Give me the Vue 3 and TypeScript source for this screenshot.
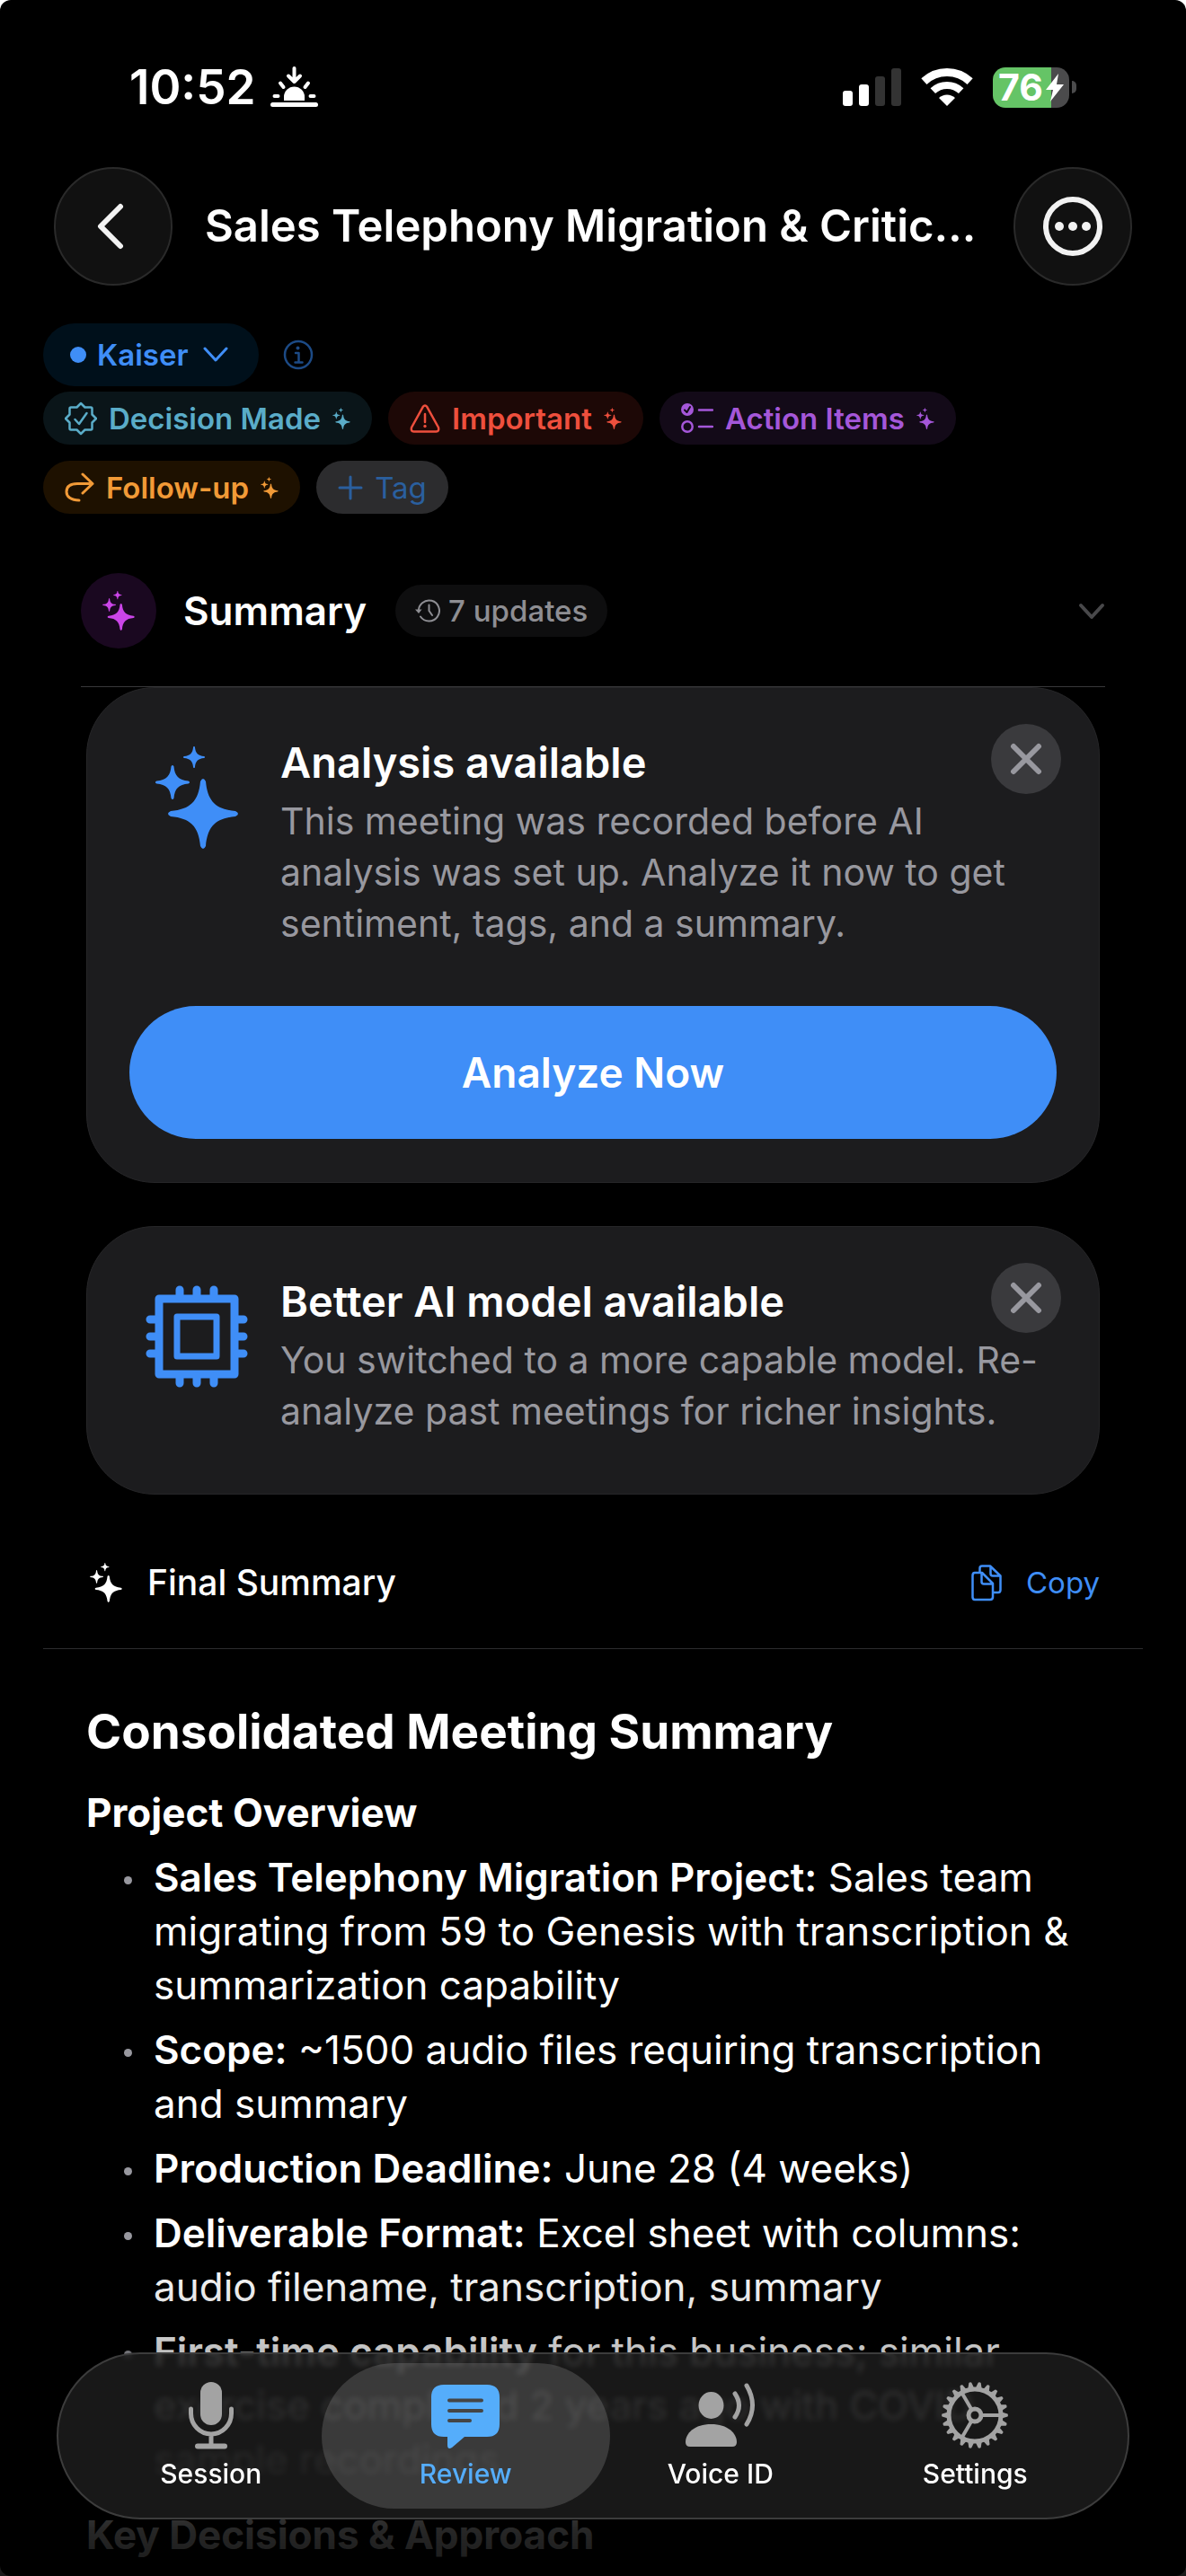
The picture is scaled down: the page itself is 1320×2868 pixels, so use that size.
<script setup lang="ts">
import { ref } from 'vue'

interface Tag {
  label: string
  tone: 'teal' | 'red' | 'purple' | 'orange'
}

interface Point {
  lead: string
  text: string
}

const tags: Tag[] = [
  { label: 'Decision Made', tone: 'teal' },
  { label: 'Important', tone: 'red' },
  { label: 'Action Items', tone: 'purple' },
  { label: 'Follow-up', tone: 'orange' },
]

const points: Point[] = [
  {
    lead: 'Sales Telephony Migration Project:',
    text: 'Sales team migrating from 59 to Genesis with transcription & summarization capability',
  },
  { lead: 'Scope:', text: '~1500 audio files requiring transcription and summary' },
  { lead: 'Production Deadline:', text: 'June 28 (4 weeks)' },
  {
    lead: 'Deliverable Format:',
    text: 'Excel sheet with columns: audio filename, transcription, summary',
  },
  {
    lead: 'First-time capability',
    text: 'for this business; similar exercise completed 2 years ago with COVID sample recordings',
  },
]

const tabs = ['Session', 'Review', 'Voice ID', 'Settings']
const activeTab = ref('Review')

const toothAngles = Array.from({ length: 22 }, (_, i) => (i * 360) / 22)
</script>

<template>
  <div class="app">
    <svg class="defs" aria-hidden="true">
      <defs>
        <path
          id="star"
          d="M-3-36Q0-42 3-36C5-14 14-5 36-3Q42 0 36 3C14 5 5 14 3 36Q0 42-3 36C-5 14-14 5-36 3Q-42 0-36-3C-14-5-5-14-3-36Z"
        />
        <symbol id="sparkles" viewBox="0 0 92 114">
          <use href="#star" transform="translate(53 75)" />
          <use href="#star" transform="translate(19 40) scale(.49)" />
          <use href="#star" transform="translate(43 12) scale(.31)" />
        </symbol>
      </defs>
    </svg>

    <div class="status">
      <span class="clock">10:52</span>
      <svg class="sunset" width="53" height="46" viewBox="0 0 53 46" fill="none" stroke="#fff" stroke-width="4" stroke-linecap="round" stroke-linejoin="round">
        <path d="M26.500 2V17M20 10.500 26.500 17 33 10.500M4.500 33h4M44.500 33h4M11 18.500 14.500 23M42 18.500 38.500 23" />
        <path d="M15 38v-4a11.500 11.500 0 0 1 23 0v4z" fill="#fff" stroke="none" />
        <path d="M2.500 42.500H50.500" stroke-width="5" />
      </svg>
      <span class="spacer"></span>
      <svg width="65" height="42" viewBox="0 0 65 42">
        <rect x="0" y="25" width="11" height="17" rx="3" fill="#fff" />
        <rect x="18" y="18" width="11" height="24" rx="3" fill="#fff" />
        <rect x="36" y="9" width="11" height="33" rx="3" fill="#333" />
        <rect x="54" y="0" width="11" height="42" rx="3" fill="#333" />
      </svg>
      <svg class="wifi" width="58" height="43" viewBox="0 0 58 43" fill="none" stroke="#fff">
        <path d="M3.400 14.600A37.500 37.500 0 0 1 54.600 14.600" stroke-width="9" />
        <path d="M13.300 25.200A23 23 0 0 1 44.700 25.200" stroke-width="8" />
        <path d="M29 42 20 33A13 13 0 0 1 38 33Z" fill="#fff" stroke="none" />
      </svg>
      <div class="battery">
        <span class="level">76</span>
        <svg width="20" height="31" viewBox="0 0 20 31"><path d="M14 0 0 18H8L5 31 20 12H12Z" fill="#fff" /></svg>
      </div>
      <span class="battery-cap"></span>
    </div>

    <header class="nav">
      <button class="round" aria-label="Back">
        <svg width="38" height="54" viewBox="0 0 38 54" fill="none" stroke="#f2f2f2" stroke-width="6" stroke-linecap="round" stroke-linejoin="round">
          <path d="M27 5 5 27 27 49" />
        </svg>
      </button>
      <h1>Sales Telephony Migration &amp; Critic…</h1>
      <button class="round" aria-label="More">
        <svg width="66" height="66" viewBox="0 0 66 66">
          <circle cx="33" cy="33" r="30" fill="none" stroke="#f2f2f2" stroke-width="6" />
          <g fill="#f2f2f2"><circle cx="18" cy="33" r="5" /><circle cx="33" cy="33" r="5" /><circle cx="48" cy="33" r="5" /></g>
        </svg>
      </button>
    </header>

    <div class="labels">
      <div class="owner">
        <button class="folder">
          <span class="dot"></span>Kaiser
          <svg width="28" height="18" viewBox="0 0 28 18" fill="none" stroke="currentColor" stroke-width="3" stroke-linecap="round" stroke-linejoin="round"><path d="M2 2 14 15 26 2" /></svg>
        </button>
        <button class="info" aria-label="Info">
          <svg width="34" height="34" viewBox="0 0 34 34" fill="none" stroke="#1c4a85" stroke-width="2.500" stroke-linecap="round" stroke-linejoin="round">
            <circle cx="17" cy="17" r="15" />
            <path d="M14 15h3.500v10M13.500 25.500h8" />
            <circle cx="16.500" cy="9.500" r="2" fill="#1c4a85" stroke="none" />
          </svg>
        </button>
      </div>
      <div class="tags">
        <button v-for="tag in tags" :key="tag.label" class="tag" :class="tag.tone">
          <svg v-if="tag.tone === 'teal'" width="36" height="38" viewBox="-18 -19 36 38" fill="none" stroke="currentColor" stroke-width="2.500" stroke-linecap="round" stroke-linejoin="round">
            <path d="M0-17 4.500-12.500H11Q12.500-12.500 12.500-11V-4.500L17 0 12.500 4.500V11Q12.500 12.500 11 12.500H4.500L0 17-4.500 12.500H-11Q-12.500 12.500-12.500 11V4.500L-17 0-12.500-4.500V-11Q-12.500-12.500-11-12.500H-4.500Z" />
            <path d="M-6.500 1-2 6 6.500-6" />
          </svg>
          <svg v-else-if="tag.tone === 'red'" width="34" height="32" viewBox="0 0 34 32" fill="none" stroke="currentColor" stroke-width="2.500" stroke-linecap="round" stroke-linejoin="round">
            <path d="M14.800 2.800Q17 .2 19.200 2.800L32 26Q33 30.500 29.500 30.500H4.500Q1 30.500 2 26Z" />
            <path d="M17 11v9" />
            <circle cx="17" cy="24.500" r="1.700" fill="currentColor" stroke="none" />
          </svg>
          <svg v-else-if="tag.tone === 'purple'" width="36" height="34" viewBox="0 0 36 34" fill="none" stroke="currentColor" stroke-width="2.500" stroke-linecap="round" stroke-linejoin="round">
            <circle cx="7" cy="7" r="7" fill="currentColor" stroke="none" />
            <path d="M4 7.500 6.500 10 10 4" stroke="#130a18" stroke-width="2" />
            <circle cx="7" cy="26" r="5.700" />
            <path d="M20 7.500h15M20 26h15" />
          </svg>
          <svg v-else width="33" height="33" viewBox="0 0 33 33" fill="none" stroke="currentColor" stroke-width="3" stroke-linecap="round" stroke-linejoin="round">
            <path d="M20 2 31 12.500 20 23M31 12.500H14C6 12.500 2 16 2 21.500S7 31 16 31" />
          </svg>
          <span>{{ tag.label }}</span>
          <svg width="20" height="24" fill="currentColor"><use href="#sparkles" /></svg>
        </button>
        <button class="tag add">
          <svg width="28" height="28" viewBox="0 0 28 28" fill="none" stroke="currentColor" stroke-width="3" stroke-linecap="round"><path d="M14 2V26M2 14H26" /></svg>
          <span>Tag</span>
        </button>
      </div>
    </div>

    <section class="summary">
      <div class="summary-head">
        <span class="badge"><svg width="36" height="44" fill="#cb45e8"><use href="#sparkles" /></svg></span>
        <h2>Summary</h2>
        <button class="updates">
          <svg width="28" height="26" viewBox="0 0 28 26" fill="none" stroke="currentColor" stroke-width="2" stroke-linecap="round" stroke-linejoin="round">
            <path d="M4 14A11.500 11.500 0 1 1 6 19.500M15.500 6.500V13L19 18" />
            <path d="M0 11.500H7.500L4 16Z" fill="currentColor" stroke="none" />
          </svg>
          7 updates
        </button>
        <span class="spacer"></span>
        <svg width="30" height="20" viewBox="0 0 30 20" fill="none" stroke="#48484a" stroke-width="4" stroke-linecap="round" stroke-linejoin="round"><path d="M3 4 15 17 27 4" /></svg>
      </div>

      <div class="cards">
        <article class="card">
          <div class="card-body">
            <div class="card-icon"><svg width="92" height="114" fill="#3f8ef7"><use href="#sparkles" /></svg></div>
            <div>
              <h3>Analysis available</h3>
              <p>This meeting was recorded before AI analysis was set up. Analyze it now to get sentiment, tags, and a summary.</p>
            </div>
          </div>
          <button class="primary">Analyze Now</button>
          <button class="close" aria-label="Dismiss">
            <svg width="36" height="36" viewBox="0 0 36 36" stroke="#98989f" stroke-width="6" stroke-linecap="round"><path d="M4 4 32 32M32 4 4 32" /></svg>
          </button>
        </article>

        <article class="card">
          <div class="card-body">
            <div class="card-icon">
              <svg width="114" height="114" viewBox="0 0 114 114" fill="none" stroke="#3f8ef7" stroke-linejoin="round" stroke-linecap="round">
                <rect x="15" y="15" width="84" height="84" stroke-width="9" />
                <rect x="35" y="35" width="44" height="44" stroke-width="7" />
                <path stroke-width="9" d="M38 5V12M57 5V12M76 5V12M38 102V109M57 102V109M76 102V109M5 38H12M5 57H12M5 76H12M102 38H109M102 57H109M102 76H109" />
              </svg>
            </div>
            <div>
              <h3>Better AI model available</h3>
              <p>You switched to a more capable model. Re-analyze past meetings for richer insights.</p>
            </div>
          </div>
          <button class="close" aria-label="Dismiss">
            <svg width="36" height="36" viewBox="0 0 36 36" stroke="#98989f" stroke-width="6" stroke-linecap="round"><path d="M4 4 32 32M32 4 4 32" /></svg>
          </button>
        </article>
      </div>
    </section>

    <section class="final">
      <div class="final-head">
        <svg width="42" height="44" viewBox="-4 0 42 44" fill="#fff"><use href="#sparkles" width="36" height="44" /></svg>
        <h2>Final Summary</h2>
        <span class="spacer"></span>
        <button class="copy">
          <svg width="34" height="41" viewBox="0 0 34 41" fill="none" stroke="currentColor" stroke-width="2.500" stroke-linejoin="round">
            <path d="M4 9H12L24 21V36Q24 39 21 39H4Q1.500 39 1.500 36V12Q1.500 9 4 9ZM11.500 9V19Q11.500 21.500 14 21.500H24" />
            <path d="M9.500 9V4Q9.500 1.500 12 1.500H21L32.500 12.500V28Q32.500 31 30 31H24M21.500 1.500V10Q21.500 12.500 24 12.500H32.500" />
          </svg>
          Copy
        </button>
      </div>
      <div class="doc">
        <h2>Consolidated Meeting Summary</h2>
        <h3>Project Overview</h3>
        <ul>
          <li v-for="point in points" :key="point.lead">
            <span><strong>{{ point.lead }}</strong> {{ point.text }}</span>
          </li>
        </ul>
        <h3 class="next">Key Decisions &amp; Approach</h3>
      </div>
    </section>

    <div class="fade"></div>

    <nav class="tabbar">
      <button v-for="tab in tabs" :key="tab" class="tab" :class="{ active: tab === activeTab }" @click="activeTab = tab">
        <span class="tab-icon">
          <svg v-if="tab === 'Session'" width="50" height="75" viewBox="0 0 50 75" fill="none" stroke="currentColor" stroke-width="5" stroke-linecap="round">
            <rect x="13" y="0" width="24" height="48" rx="12" fill="currentColor" stroke="none" />
            <path d="M2.500 30v5a22.500 23 0 0 0 45 0v-5M25 59v11" />
            <path d="M10 71.500H40" stroke-width="6" />
          </svg>
          <svg v-else-if="tab === 'Review'" width="76" height="76" viewBox="0 -4 76 76">
            <path d="M14 0H62Q76 0 76 14V44Q76 58 62 58H37L23 70Q18 73 18 67V58H14Q0 58 0 44V14Q0 0 14 0Z" fill="currentColor" />
            <path d="M20 17.500H56M20 29H56M20 40H43" stroke="#454545" stroke-width="4" stroke-linecap="round" />
          </svg>
          <svg v-else-if="tab === 'Voice ID'" width="78" height="72" viewBox="0 0 78 72">
            <ellipse cx="28.500" cy="25" rx="14" ry="15" fill="currentColor" />
            <path d="M0 66C0 56 10 46 28.500 46S57 56 57 66Q57 71 52 71H5Q0 71 0 66Z" fill="currentColor" />
            <path d="M55 12Q64 25 55 38M68 3Q81 25 68 46" fill="none" stroke="currentColor" stroke-width="5" stroke-linecap="round" />
          </svg>
          <svg v-else width="76" height="76" viewBox="-38 -38 76 76" fill="none" stroke="currentColor" stroke-width="5">
            <circle r="29" />
            <circle r="7" />
            <path d="M8 0H28M-4-7-14.500-25M-4 7-14.500 25" stroke-width="4" />
            <path v-for="angle in toothAngles" :key="angle" :transform="`rotate(${angle})`" d="M30-3.500 36.500-1.500Q37.500 0 36.500 1.500L30 3.500Z" fill="currentColor" stroke="none" />
          </svg>
        </span>
        <span>{{ tab }}</span>
      </button>
    </nav>
  </div>
</template>

<style>
html,
body {
  margin: 0;
  background: #fff;
}
</style>

<style scoped>
.app {
  position: relative;
  min-height: 100vh;
  box-sizing: border-box;
  overflow: hidden;
  border-radius: 12px;
  background: #000;
  color: #fff;
  font-family: Inter, 'Liberation Sans', sans-serif;
}
.defs {
  position: absolute;
  width: 0;
  height: 0;
}
button {
  display: flex;
  align-items: center;
  margin: 0;
  padding: 0;
  border: 0;
  background: none;
  color: inherit;
  font: inherit;
  white-space: nowrap;
}
svg {
  flex: none;
  display: block;
}
h1,
h2,
h3,
p,
ul {
  margin: 0;
}
.spacer {
  flex: 1;
}

.status {
  display: flex;
  align-items: center;
  height: 50px;
  padding: 72px 122px 64px 144px;
}
.clock {
  font-size: 53px;
  font-weight: 600;
}
.sunset {
  margin-left: 16px;
}
.wifi {
  margin: 0 22px;
}
.battery {
  display: flex;
  align-items: center;
  justify-content: center;
  gap: 3px;
  width: 85px;
  height: 45px;
  border-radius: 14px;
  background: linear-gradient(90deg, #65c466 77%, #4b4b4c 77%);
}
.level {
  font-size: 41px;
  font-weight: 700;
  line-height: 45px;
}
.battery-cap {
  width: 5px;
  height: 14px;
  margin-left: 3px;
  border-radius: 0 5px 5px 0;
  background: #4b4b4c;
}

.nav {
  display: flex;
  align-items: center;
  gap: 36px;
  padding: 0 60px;
}
.round {
  flex: none;
  justify-content: center;
  width: 132px;
  height: 132px;
  border: 2px solid #2a2a2a;
  border-radius: 50%;
  background: #111;
}
.nav h1 {
  flex: 1;
  font-size: 49px;
  font-weight: 600;
  line-height: 60px;
  white-space: nowrap;
}

.labels {
  padding: 42px 48px 0;
  font-size: 33px;
  font-weight: 600;
}
.owner {
  display: flex;
  align-items: center;
  gap: 27px;
  margin-bottom: 6px;
}
.folder {
  gap: 12px;
  height: 70px;
  padding: 0 34px 0 30px;
  border-radius: 35px;
  background: #00101b;
  color: #3f8ef7;
}
.folder svg {
  margin-left: 4px;
}
.dot {
  width: 18px;
  height: 18px;
  border-radius: 50%;
  background: currentColor;
}
.tags {
  display: flex;
  flex-wrap: wrap;
  gap: 18px;
}
.tag {
  gap: 13px;
  height: 59px;
  padding: 0 24px;
  border-radius: 30px;
}
.teal {
  background: #0a1519;
  color: #5aacc8;
}
.red {
  background: #1d0806;
  color: #ee4f3d;
}
.purple {
  background: #130a18;
  color: #a557d9;
}
.orange {
  background: #1e1100;
  color: #f19a37;
}
.add {
  background: #2c2c2e;
  color: #2a5f9e;
  font-weight: 400;
}

.summary-head {
  display: flex;
  align-items: center;
  margin: 66px 90px 0;
  padding-bottom: 42px;
  border-bottom: 1px solid #38383a;
}
.badge {
  display: flex;
  align-items: center;
  justify-content: center;
  width: 84px;
  height: 84px;
  margin-right: 30px;
  border-radius: 50%;
  background: #1a0820;
}
.summary-head h2 {
  font-size: 44px;
  font-weight: 600;
  line-height: 60px;
}
.updates {
  gap: 9px;
  height: 58px;
  margin-left: 32px;
  padding: 0 22px;
  border-radius: 29px;
  background: #0e0e0f;
  color: #8e8e93;
  font-size: 33px;
  font-weight: 500;
}

.cards {
  display: flex;
  flex-direction: column;
  gap: 48px;
  padding: 0 96px;
}
.card {
  position: relative;
  box-sizing: border-box;
  border: 1px solid #262628;
  border-radius: 76px;
  background: #1c1c1e;
}
.card-body {
  display: flex;
  gap: 18px;
  padding: 53px 47px 63px;
}
.card-icon {
  display: flex;
  flex: none;
  align-items: flex-start;
  justify-content: center;
  width: 150px;
  padding-top: 12px;
}
.card h3 {
  font-size: 47px;
  font-weight: 600;
  line-height: 60px;
}
.card p {
  margin-top: 7px;
  color: #98989f;
  font-size: 41px;
  line-height: 57px;
}
.primary {
  justify-content: center;
  width: calc(100% - 94px);
  height: 148px;
  margin: 0 47px 48px;
  border-radius: 74px;
  background: #3f8ef7;
  font-size: 46px;
  font-weight: 600;
}
.close {
  position: absolute;
  top: 40px;
  right: 42px;
  justify-content: center;
  width: 78px;
  height: 78px;
  border-radius: 50%;
  background: #3a3a3d;
}

.final {
  padding: 68px 48px 16px;
}
.final-head {
  display: flex;
  align-items: center;
  padding: 0 48px 43px;
  border-bottom: 1px solid #2c2c2e;
}
.final-head h2 {
  margin-left: 26px;
  font-size: 39px;
  font-weight: 500;
  line-height: 60px;
}
.copy {
  gap: 27px;
  color: #3f8ef7;
  font-size: 33px;
}
.doc {
  padding: 59px 48px 0;
}
.doc h2 {
  font-size: 53px;
  font-weight: 700;
  line-height: 66px;
}
.doc h3 {
  margin-top: 27px;
  font-size: 44px;
  font-weight: 700;
  line-height: 60px;
}
.doc ul {
  display: flex;
  flex-direction: column;
  gap: 12px;
  margin-top: 12px;
  padding: 0 0 0 42px;
  list-style: none;
  font-size: 44px;
  line-height: 60px;
}
.doc li {
  display: flex;
  gap: 24px;
}
.doc li::before {
  content: '';
  flex: none;
  width: 9px;
  height: 9px;
  margin-top: 29px;
  border-radius: 50%;
  background: #98989f;
}
.doc strong {
  font-weight: 600;
}
.doc .next {
  margin-top: 24px;
}

.fade {
  position: fixed;
  right: 0;
  bottom: 0;
  left: 0;
  height: 360px;
  background: linear-gradient(transparent, rgba(0, 0, 0, 0.1) 15%, rgba(0, 0, 0, 0.26) 32%, rgba(0, 0, 0, 0.85) 86%, rgba(0, 0, 0, 0.9));
}
.tabbar {
  position: fixed;
  right: 63px;
  bottom: 63px;
  left: 63px;
  display: flex;
  box-sizing: border-box;
  height: 186px;
  padding: 10px 28px;
  border: 2px solid #3c3c3c;
  border-radius: 93px;
  background: rgba(29, 29, 29, 0.84);
  backdrop-filter: blur(3px);
}
.tab {
  position: relative;
  flex: 1;
  flex-direction: column;
  color: #fff;
  font-size: 30px;
  font-weight: 500;
  line-height: 36px;
}
.tab > span {
  position: relative;
}
.tab-icon {
  display: flex;
  align-items: center;
  justify-content: center;
  height: 78px;
  margin: 19px 0 8px;
  color: #a3a3a3;
}
.tab.active::before {
  content: '';
  position: absolute;
  inset: 0 -19px;
  border-radius: 81px;
  background: rgba(255, 255, 255, 0.15);
}
.active,
.active .tab-icon {
  color: #55adfb;
}
</style>
